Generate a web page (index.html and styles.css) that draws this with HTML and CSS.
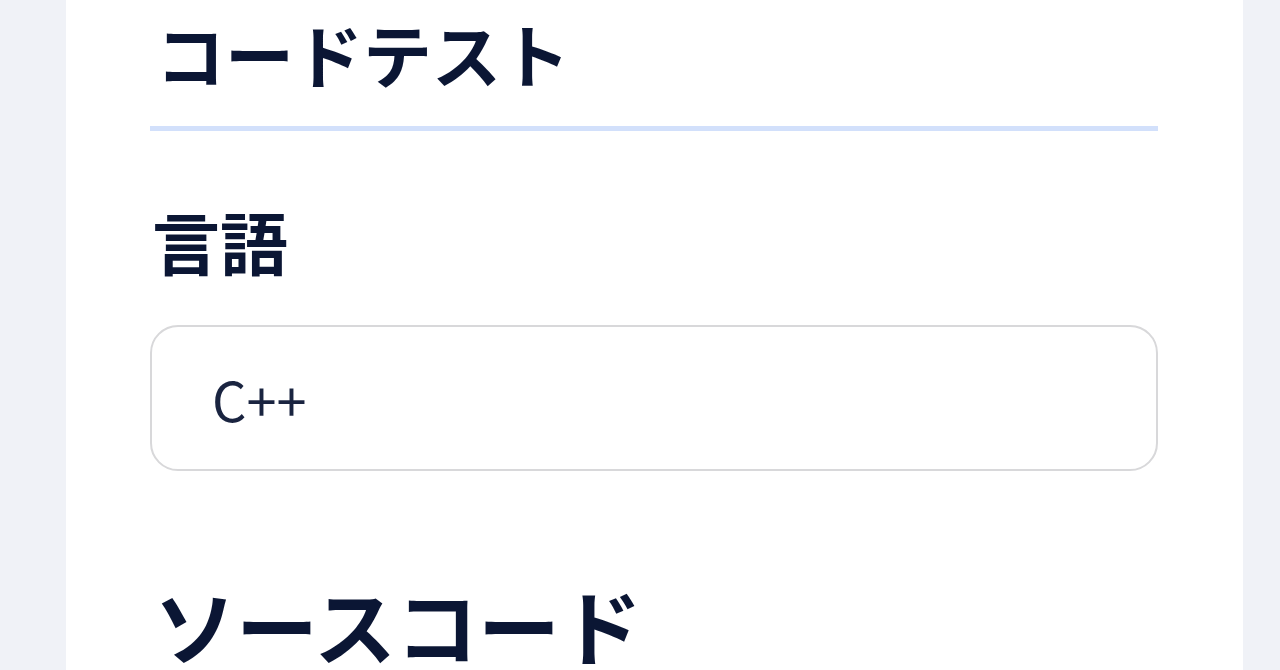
FILE: index.html
```html
<!DOCTYPE html>
<html lang="ja">
<head>
<meta charset="utf-8">
<title>コードテスト</title>
<link rel="stylesheet" href="styles.css">
</head>
<body>
<main class="page">
  <h1 class="title">コードテスト</h1>
  <section class="field">
    <h2 class="label">言語</h2>
    <div class="select">C++</div>
  </section>
  <section class="field">
    <h2 class="label label-large">ソースコード</h2>
  </section>
</main>
</body>
</html>
```
FILE: styles.css
```css
html, body {
  margin: 0;
  padding: 0;
}
body {
  background: #f0f2f7;
  font-family: "Noto Sans CJK JP", "Noto Sans", sans-serif;
  color: #0b1634;
  height: 670px;
  overflow: hidden;
}
.page {
  box-sizing: border-box;
  width: 1177px;
  margin-left: 66px;
  min-height: 670px;
  background: #ffffff;
  padding: 19px 85px 0 84px;
}
.title {
  margin: 0;
  font-size: 69px;
  line-height: 1;
  font-weight: 700;
  padding: 0 0 38px 6px;
  border-bottom: 5px solid #d2e0fb;
}
.field {
  display: flex;
  flex-direction: column;
}
.label {
  margin: 76px 0 0 2px;
  font-size: 68px;
  line-height: 1;
  font-weight: 700;
}
.label-large {
  margin-top: 112px;
  font-size: 82px;
  margin-left: 4px;
}
.select {
  margin-top: 50px;
  box-sizing: border-box;
  height: 146px;
  border: 2px solid #d8d8da;
  border-radius: 28px;
  padding-left: 60px;
  display: flex;
  align-items: center;
  font-size: 54px;
  font-weight: 400;
  color: #1a2440;
}
```
